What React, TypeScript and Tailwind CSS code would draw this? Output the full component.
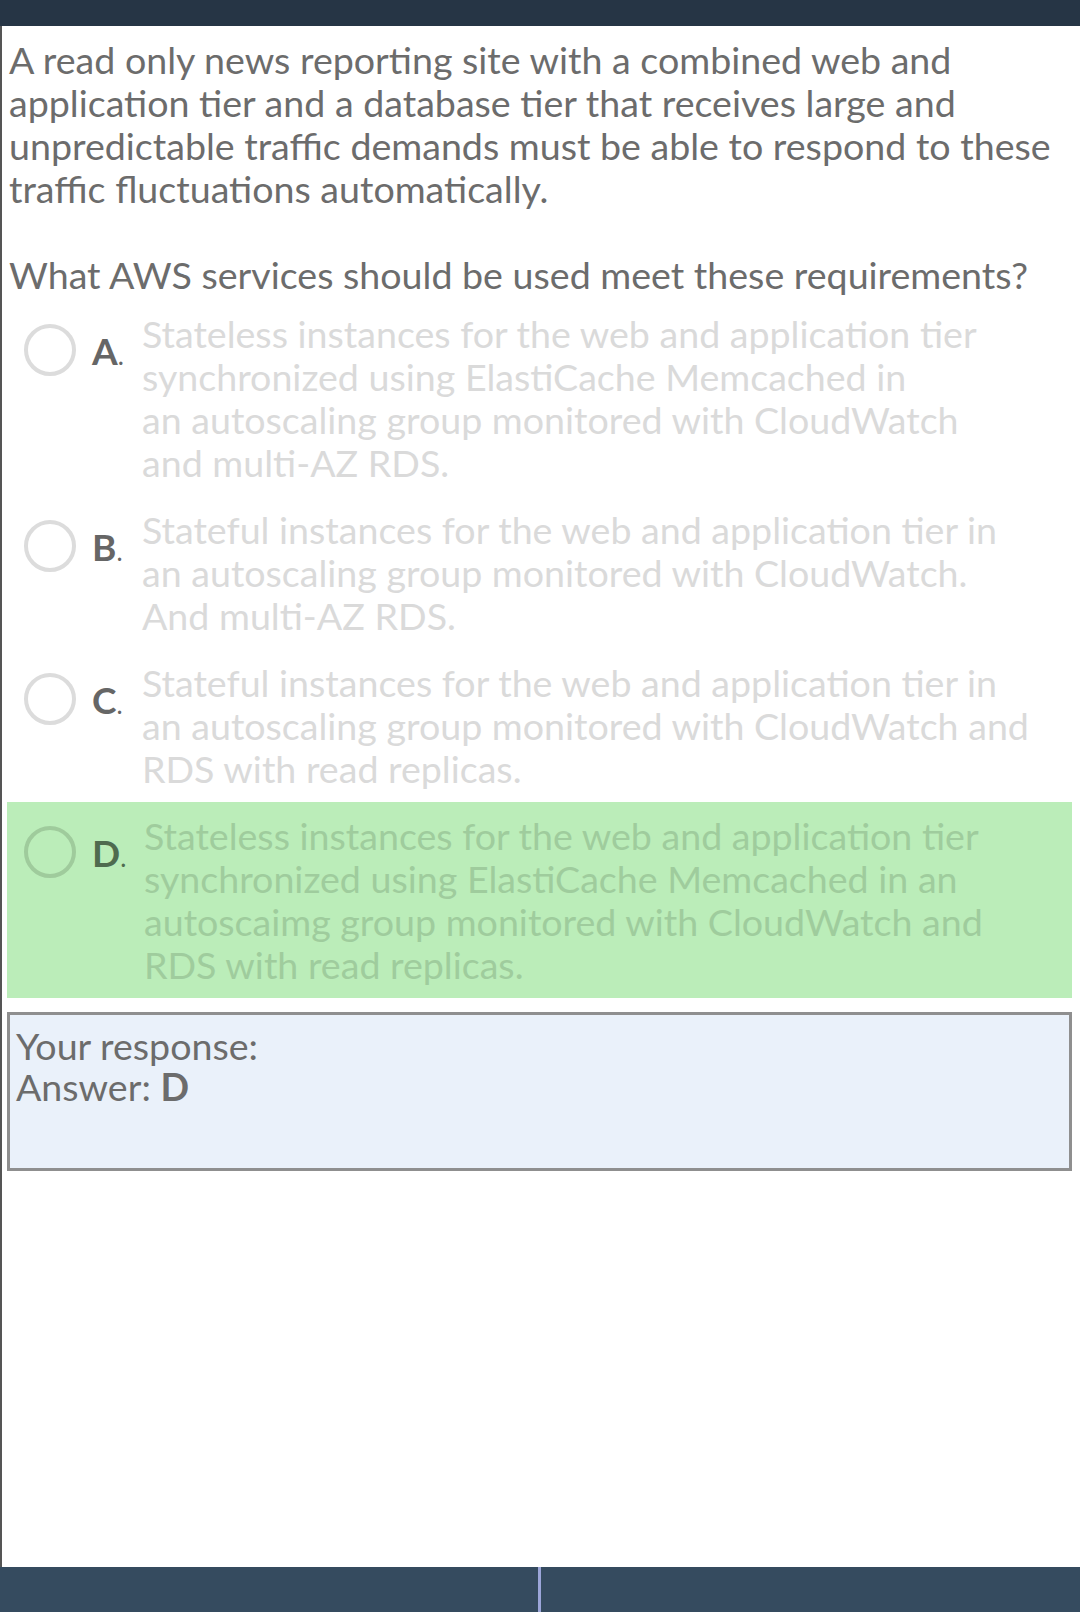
const options = [
  {
    key: 'A',
    lines: [
      'Stateless instances for the web and application tier',
      'synchronized using ElastiCache Memcached in',
      'an autoscaling group monitored with CloudWatch',
      'and multi-AZ RDS.',
    ],
  },
  {
    key: 'B',
    lines: [
      'Stateful instances for the web and application tier in',
      'an autoscaling group monitored with CloudWatch.',
      'And multi-AZ RDS.',
    ],
  },
  {
    key: 'C',
    lines: [
      'Stateful instances for the web and application tier in',
      'an autoscaling group monitored with CloudWatch and',
      'RDS with read replicas.',
    ],
  },
  {
    key: 'D',
    lines: [
      'Stateless instances for the web and application tier',
      'synchronized using ElastiCache Memcached in an',
      'autoscaimg group monitored with CloudWatch and',
      'RDS with read replicas.',
    ],
    correct: true,
  },
];

function Option({ label, lines, correct }: { label: string; lines: string[]; correct?: boolean }) {
  return (
    <div className={`flex items-start py-[12px] ${correct ? 'bg-[#bbedb9]' : ''}`}>
      <div className="mt-[12px] flex shrink-0 items-center pl-[17px]">
        <div
          className={`h-[52px] w-[52px] rounded-full border-4 ${correct ? 'border-[#9fcb9c]' : 'border-[#dcdcdc]'}`}
        ></div>
        <span className={`ml-[16px] w-[34px] text-[37px] leading-none ${correct ? 'text-[#4f6b4f]' : 'text-[#666]'}`}>
          <span className="font-bold">{label}</span>
          <span className="text-[26px]">.</span>
        </span>
      </div>
      <p
        className={`text-[37.6px] leading-[43px] ${correct ? 'ml-[18px] text-[#9fcc9d]' : 'ml-[16px] text-[#dadada]'}`}
      >
        {lines.map((l, i) => (
          <span key={i}>
            {l}
            {i < lines.length - 1 && <br />}
          </span>
        ))}
      </p>
    </div>
  );
}

export default function App() {
  return (
    <div className="flex h-[1612px] w-[1080px] flex-col bg-white font-['Lato',sans-serif]">
      <div className="h-[26px] shrink-0 bg-[#263545]"></div>

      <main className="flex-1 border-l-2 border-[#555] pl-[5px] pr-[8px]">
        <div className="px-[2px] pt-[12px] text-[37.6px] leading-[43px] text-[#6c6c6c]">
          <p>
            A read only news reporting site with a combined web and
            <br />
            application tier and a database tier that receives large and
            <br />
            unpredictable traffic demands must be able to respond to these
            <br />
            traffic fluctuations automatically.
          </p>
          <p className="mt-[43px]">What AWS services should be used meet these requirements?</p>
        </div>

        <div className="mt-[4px]">
          {options.map((o) => (
            <Option key={o.key} label={o.key} lines={o.lines} correct={o.correct} />
          ))}
        </div>

        <div className="mt-[14px] h-[159px] border-[3px] border-[#8f8f8f] bg-[#eaf1fa] px-[6px] pt-[10px] text-[37.6px] leading-[41px] text-[#6c6c6c]">
          <p>Your response:</p>
          <p>
            Answer: <span className="font-bold">D</span>
          </p>
        </div>
      </main>

      <footer className="flex h-[45px] shrink-0 bg-[#354b5f]">
        <div className="w-[538px]"></div>
        <div className="w-[3px] bg-[#9ca6d9]"></div>
      </footer>
    </div>
  );
}
